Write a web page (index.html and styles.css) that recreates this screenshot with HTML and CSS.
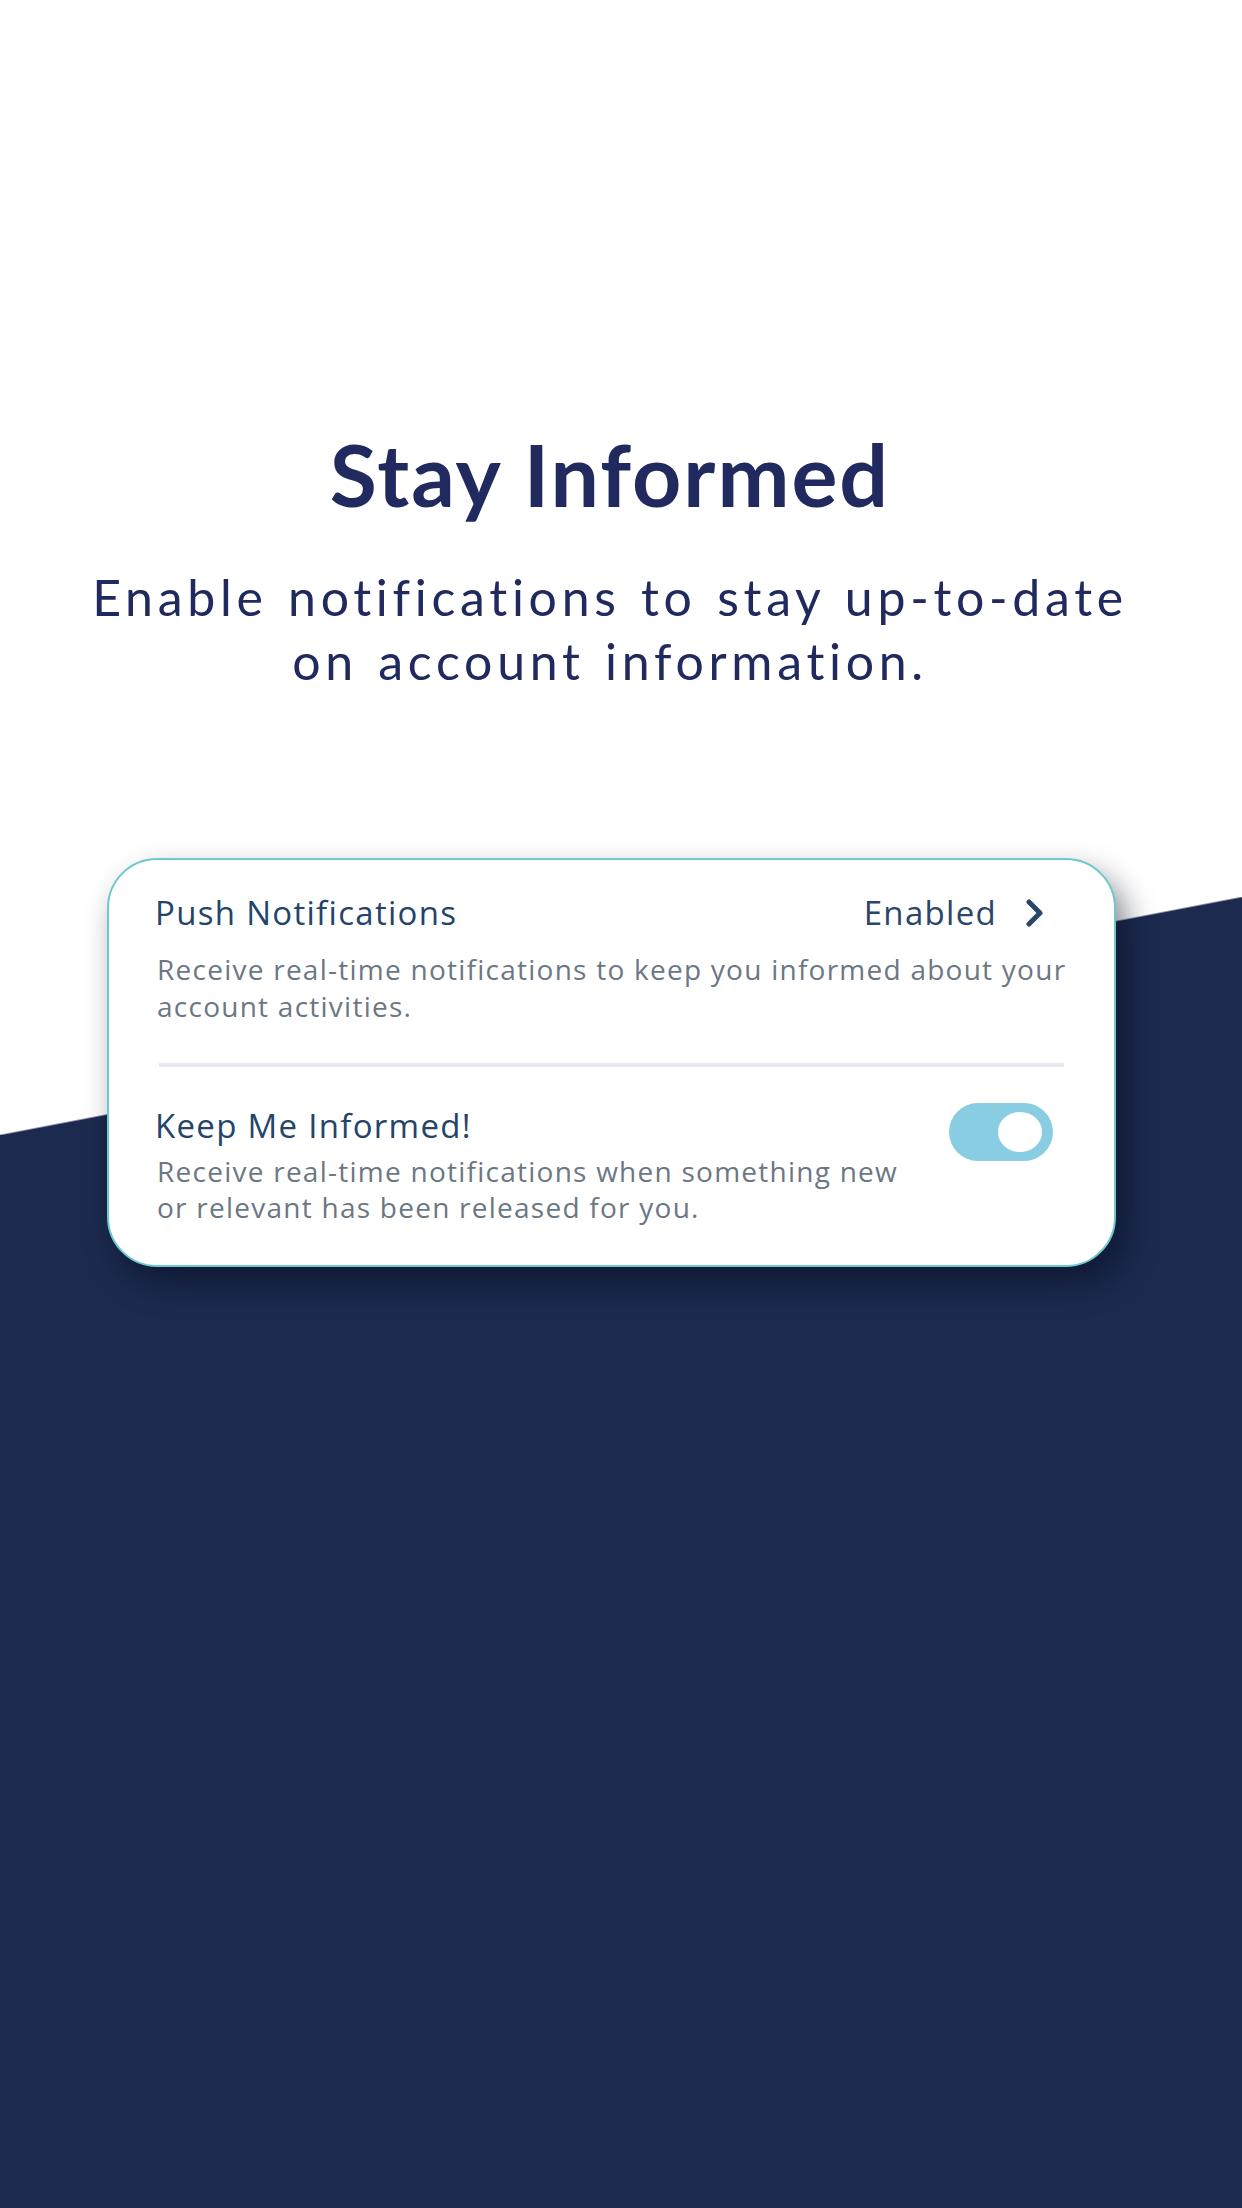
FILE: index.html
```html
<!DOCTYPE html>
<html lang="en">
<head>
<meta charset="utf-8">
<title>Stay Informed</title>
<link rel="stylesheet" href="styles.css">
</head>
<body>
<main class="page">
  <section class="hero">
    <h1 class="title">Stay Informed</h1>
    <p class="subtitle">Enable notifications to stay up-to-date<br>on account information.</p>
  </section>
  <section class="card">
    <div class="row">
      <div class="row-head">
        <span class="row-title">Push Notifications</span>
        <span class="status">Enabled
          <svg class="chevron" width="20" height="28" viewBox="0 0 20 28" aria-hidden="true"><path d="M4 3 L15 14 L4 25" fill="none" stroke="#2a4668" stroke-width="5" stroke-linecap="round" stroke-linejoin="round"/></svg>
        </span>
      </div>
      <p class="row-desc">Receive real-time notifications to keep you informed about your<br>account activities.</p>
    </div>
    <hr class="divider">
    <div class="row row-toggle">
      <div class="row-text">
        <span class="row-title">Keep Me Informed!</span>
        <p class="row-desc tight">Receive real-time notifications when something new<br>or relevant has been released for you.</p>
      </div>
      <div class="toggle" role="switch" aria-checked="true"><span class="knob"></span></div>
    </div>
  </section>
</main>
</body>
</html>
```

FILE: styles.css
```css
html, body {
  margin: 0;
  padding: 0;
}

.page {
  width: 1242px;
  min-height: 2208px;
  box-sizing: border-box;
  display: flex;
  flex-direction: column;
  background:
    linear-gradient(to bottom right, #ffffff 49.8%, #1b2a4e 50.2%) 0 897px / 1242px 238px no-repeat,
    linear-gradient(#ffffff 897px, #1b2a4e 897px);
}

.hero {
  padding: 422px 22px 0 0;
  text-align: center;
  color: #212a5f;
}

.title {
  margin: 0;
  font-family: Lato, "Open Sans", sans-serif;
  font-weight: 700;
  font-size: 86px;
  line-height: 103px;
  letter-spacing: 2px;
}

.subtitle {
  margin: 40px 0 0;
  font-family: Lato, "Open Sans", sans-serif;
  font-weight: 400;
  font-size: 50px;
  line-height: 64px;
  letter-spacing: 4.7px;
  word-spacing: 3px;
}

.card {
  margin: 165px 0 0 107px;
  width: 1009px;
  box-sizing: border-box;
  background: #ffffff;
  border: 2px solid #6ec8cf;
  border-radius: 50px;
  padding: 33px 45px 40px 46px;
  box-shadow: 10px 16px 30px rgba(5, 10, 30, 0.5);
  font-family: "Open Sans", sans-serif;
}

.row-head {
  display: flex;
  justify-content: space-between;
  align-items: center;
}

.row-title {
  display: block;
  font-size: 33px;
  line-height: 40px;
  letter-spacing: 1.3px;
  color: #24446a;
}

.status {
  display: flex;
  align-items: center;
  gap: 28px;
  font-size: 33px;
  line-height: 40px;
  letter-spacing: 1.3px;
  color: #2a4668;
  margin-right: 24px;
}

.chevron {
  display: block;
}

.row-desc {
  margin: 18px 0 0 2px;
  font-size: 28px;
  line-height: 37px;
  letter-spacing: 1.25px;
  color: #6c7784;
}

.row-desc.tight {
  margin-top: 7px;
  line-height: 36px;
}

.divider {
  margin: 38px 5px 0 4px;
  height: 4px;
  border: 0;
  background: #e6eaf0;
}

.row-toggle {
  display: flex;
  justify-content: space-between;
  align-items: flex-start;
  margin-top: 39px;
}

.toggle {
  flex: none;
  margin-top: -3px;
  margin-right: 16px;
  width: 104px;
  height: 58px;
  border-radius: 29px;
  background: #89cde3;
  display: flex;
  align-items: center;
  justify-content: flex-end;
  padding-right: 11px;
  box-sizing: border-box;
}

.knob {
  width: 44px;
  height: 40px;
  border-radius: 50%;
  background: #ffffff;
}
```
